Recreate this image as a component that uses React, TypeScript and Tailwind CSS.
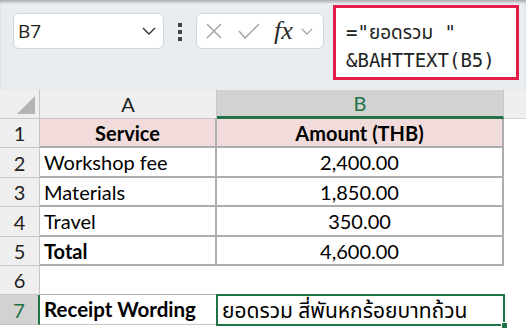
import React from 'react';

const cellFont = { fontFamily: 'Lato, "Noto Sans Thai", "Noto Sans", sans-serif' };

const rows = [
  { n: 1, a: 'Service', b: 'Amount (THB)', h: 'h-[29px]', head: true },
  { n: 2, a: 'Workshop fee', b: '2,400.00', h: 'h-[30px]' },
  { n: 3, a: 'Materials', b: '1,850.00', h: 'h-[29px]' },
  { n: 4, a: 'Travel', b: '350.00', h: 'h-[30px]' },
  { n: 5, a: 'Total', b: '4,600.00', h: 'h-[29px]', bold: true },
];

const Chevron = ({ className }: { className?: string }) => (
  <svg viewBox="0 0 14 8" className={className} fill="none" stroke="currentColor" strokeWidth="1.4">
    <polyline points="1,1 7,7 13,1" />
  </svg>
);

const App = () => {
  return (
    <div className="w-[526px] h-[330px] overflow-hidden bg-white" style={cellFont}>
      {/* formula bar */}
      <div className="h-[90px] bg-[#e9edf0] flex items-start pl-[13px] shadow-[inset_0_3px_3px_-1px_rgba(0,0,0,0.28)]">
        <div className="mt-[13px] w-[151px] h-[36px] rounded-[6px] border border-[#d3d7db] bg-white flex items-center justify-between pl-[4px] pr-[7px]">
          <span className="text-[19px] text-[#222]" style={{ fontFamily: '"Open Sans", sans-serif' }}>B7</span>
          <Chevron className="w-[14px] h-[8px] text-[#333]" />
        </div>
        <div className="ml-[14px] mt-[23px] flex flex-col gap-[3px]">
          <div className="w-[4px] h-[4px] bg-[#444]" />
          <div className="w-[4px] h-[4px] bg-[#444]" />
          <div className="w-[4px] h-[4px] bg-[#444]" />
        </div>
        <div className="ml-[14px] mt-[13px] w-[128px] h-[36px] rounded-[6px] border border-[#d3d7db] bg-white flex items-center pl-[8px]">
          <svg viewBox="0 0 18 18" className="w-[18px] h-[18px] text-[#a3a3a3]" fill="none" stroke="currentColor" strokeWidth="1.5">
            <line x1="2" y1="2" x2="16" y2="16" />
            <line x1="16" y1="2" x2="2" y2="16" />
          </svg>
          <svg viewBox="0 0 22 16" className="ml-[15px] w-[22px] h-[16px] text-[#a3a3a3]" fill="none" stroke="currentColor" strokeWidth="1.5">
            <polyline points="1,8 7,15 21,1" />
          </svg>
          <span className="ml-[14px] text-[26px] italic text-[#2a2a2a] leading-none" style={{ fontFamily: '"Liberation Serif", serif' }}>fx</span>
          <Chevron className="ml-[8px] w-[12px] h-[7px] text-[#999]" />
        </div>
        <div className="ml-[9px] mt-[5px] w-[186px] h-[75px] border-[3px] border-[#e11d48] bg-white pl-[10px] pt-[10px] text-[19px] leading-[28px] text-[#222]" style={{ fontFamily: '"DejaVu Sans Mono", "Noto Sans Thai", monospace' }}>
          <div>="ยอดรวม "</div>
          <div>&amp;BAHTTEXT(B5)</div>
        </div>
      </div>

      {/* column headers */}
      <div className="flex h-[29px] text-[20px] text-[#222]">
        <div className="w-[40px] bg-[#efefef] border-r border-b border-[#c6c6c6] flex items-end justify-end pr-[4px] pb-[4px]">
          <svg viewBox="0 0 18 18" className="w-[18px] h-[18px]">
            <polygon points="18,0 18,18 0,18" fill="#b4b4b4" />
          </svg>
        </div>
        <div className="w-[177px] bg-[#efefef] border-r border-b border-[#c6c6c6] flex items-center justify-center">A</div>
        <div className="w-[287px] bg-[#d2d2d2] border-r border-[#c6c6c6] border-b-[3px] border-b-[#217346] flex items-center justify-center text-[#217346]">B</div>
        <div className="flex-1 bg-[#efefef] border-b border-[#d6d6d6]" />
      </div>

      {/* table rows */}
      {rows.map((r) => (
        <div key={r.n} className={`flex ${r.h} text-[20px] text-black`}>
          <div className="w-[40px] bg-[#efefef] border-r border-b border-[#c6c6c6] flex items-center justify-center text-[#222]">{r.n}</div>
          <div className={`w-[177px] border-r-2 border-b-2 border-[#adadad] flex items-center ${r.head ? 'bg-[#f2dcdb] justify-center font-bold' : 'pl-[4px]'} ${r.bold ? 'font-bold' : ''}`}>{r.a}</div>
          <div className={`w-[287px] border-r-2 border-b-2 border-[#adadad] flex items-center justify-center ${r.head ? 'bg-[#f2dcdb] font-bold' : ''}`}>{r.b}</div>
          <div className="flex-1" />
        </div>
      ))}

      {/* row 6 */}
      <div className="flex h-[29px] text-[20px]">
        <div className="w-[40px] bg-[#efefef] border-r border-b border-[#c6c6c6] flex items-center justify-center text-[#222]">6</div>
        <div className="w-[464px] border-b border-[#b4b4b4]" />
        <div className="flex-1" />
      </div>

      {/* row 7 */}
      <div className="flex h-[30px] text-[20px] text-black">
        <div className="w-[40px] bg-[#d2d2d2] border-r-2 border-r-[#217346] border-b border-b-[#c6c6c6] flex items-center justify-center text-[#217346]">7</div>
        <div className="w-[177px] border-b border-[#c6c6c6] flex items-center pl-[4px] font-bold text-[20.5px]">Receipt Wording</div>
        <div className="relative w-[287px] flex items-center pl-[5px] text-[21px]">
          ยอดรวม สี่พันหกร้อยบาทถ้วน
          <div className="absolute -left-[1px] -top-[1px] -right-[1px] -bottom-[1px] border-2 border-[#217346]" />
          <div className="absolute -right-[4px] -bottom-[4px] w-[7px] h-[7px] bg-[#217346] border border-white" />
        </div>
        <div className="flex-1" />
      </div>
    </div>
  );
};

export default App;
